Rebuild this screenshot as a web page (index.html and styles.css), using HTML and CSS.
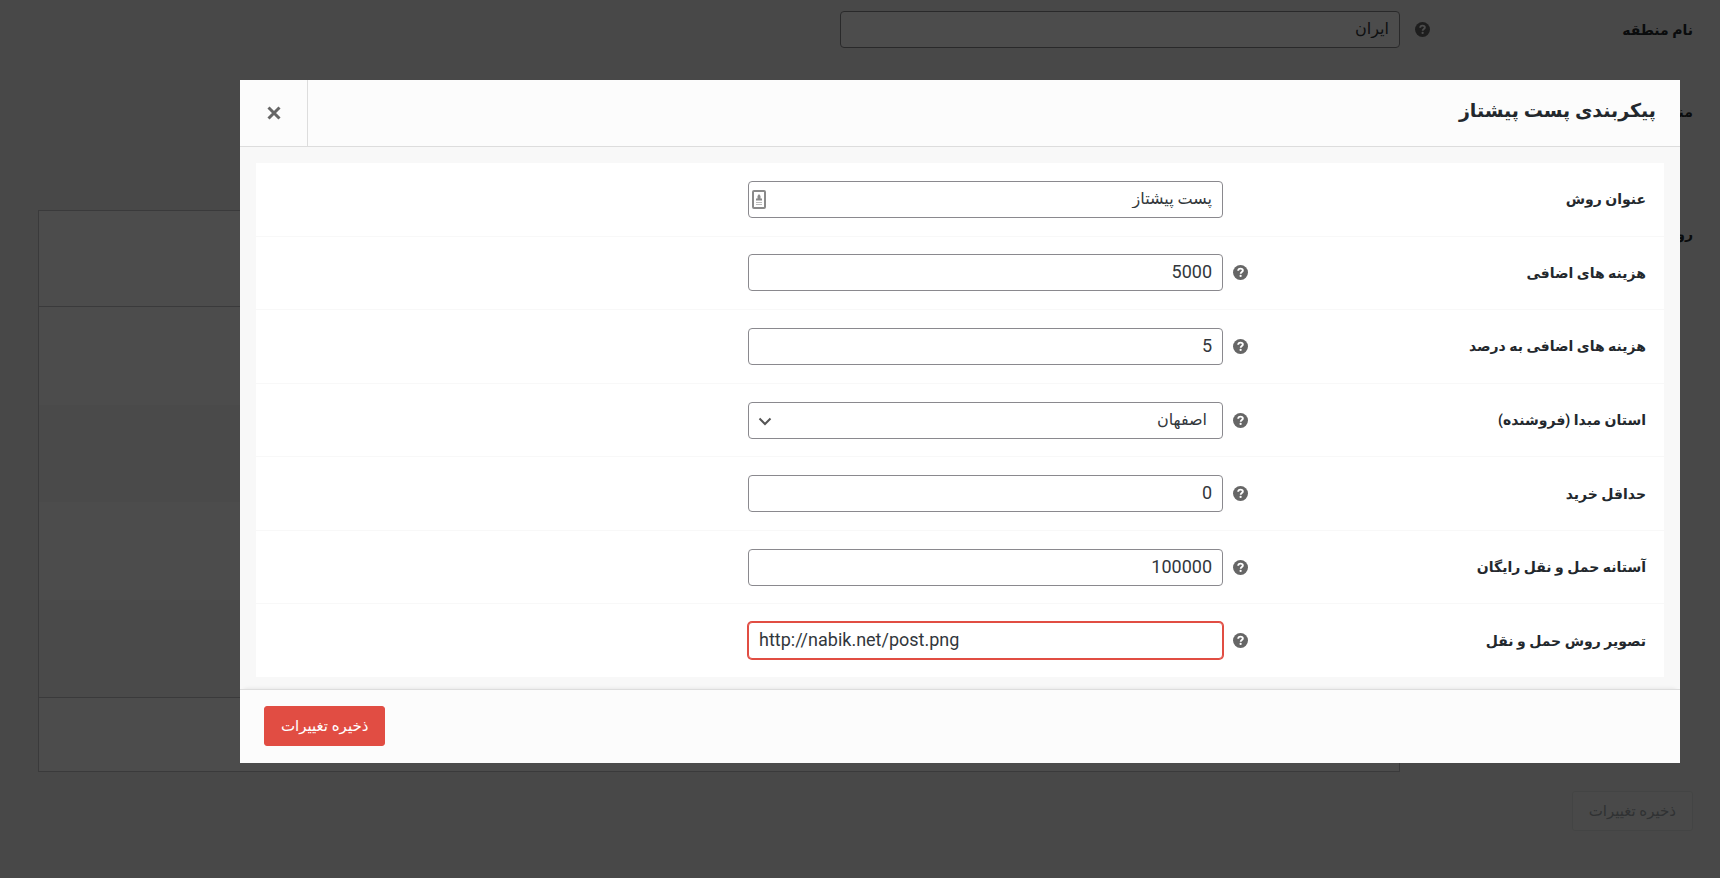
FILE: index.html
```
<!DOCTYPE html>
<html lang="fa" dir="rtl">
<head>
<meta charset="utf-8">
<meta name="viewport" content="width=device-width, initial-scale=1">
<title>پیکربندی پست پیشتاز</title>
<link rel="stylesheet" href="styles.css">
</head>
<body>
<svg class="sprite" aria-hidden="true">
  <symbol id="help" viewBox="0 0 16 16">
    <circle cx="8" cy="8" r="8" fill="currentColor"/>
    <path class="help-mark" d="M5.500 6.200C5.600 4.600 6.600 3.900 8 3.900c1.500 0 2.500.8 2.500 2 0 1.700-2.300 1.700-2.300 3.500"/>
    <circle class="help-dot" cx="8.100" cy="11.700" r="1.200"/>
  </symbol>
</svg>

<main class="page">
  <div class="zone-row">
    <label class="zone-label" for="zone-name">نام منطقه</label>
    <svg class="help"><use href="#help"/></svg>
    <input class="field field-fa" id="zone-name" type="text" value="ایران">
  </div>
  <div class="zone-row zone-regions">
    <span class="zone-label">منطقه</span>
  </div>
  <div class="zone-row zone-methods">
    <span class="zone-label">روش‌ها</span>
    <div class="methods">
      <div class="methods-head"></div>
      <div class="methods-body">
        <div class="method"></div>
        <div class="method"></div>
        <div class="method"></div>
        <div class="method"></div>
      </div>
      <div class="methods-foot"></div>
    </div>
  </div>
  <button class="button button-disabled" type="button" disabled>ذخیره تغییرات</button>
</main>

<div class="overlay">
  <section class="modal" role="dialog" aria-labelledby="modal-title">
    <header class="modal-header">
      <h1 class="modal-title" id="modal-title">پیکربندی پست پیشتاز</h1>
      <button class="close" type="button" aria-label="بستن">
        <svg class="close-icon" viewBox="0 0 14 14"><path d="M1.500 1.500l11 11M12.500 1.500l-11 11"/></svg>
      </button>
    </header>
    <form class="modal-body" id="method-form">
      <div class="rows">
        <div class="row">
          <label class="row-label" for="title">عنوان روش</label>
          <span></span>
          <div class="control">
            <input class="field field-fa" id="title" type="text" value="پست پیشتاز">
            <svg class="contact" viewBox="0 0 14 19"><rect x="1" y="1" width="12" height="17" rx="1"/><path class="contact-fill" d="M7 4l1.500 2v2.500h1.500v2H4v-2h1.500V6z"/><path class="contact-line" d="M4 12.500h6M4 14.500h6"/></svg>
          </div>
        </div>
        <div class="row">
          <label class="row-label" for="extra">هزینه های اضافی</label>
          <svg class="help"><use href="#help"/></svg>
          <input class="field" id="extra" type="text" value="5000">
        </div>
        <div class="row">
          <label class="row-label" for="percent">هزینه های اضافی به درصد</label>
          <svg class="help"><use href="#help"/></svg>
          <input class="field" id="percent" type="text" value="5">
        </div>
        <div class="row">
          <label class="row-label" for="province">استان مبدا (فروشنده)</label>
          <svg class="help"><use href="#help"/></svg>
          <div class="control">
            <select class="field field-fa select" id="province"><option>اصفهان</option></select>
            <svg class="chevron" viewBox="0 0 14 9"><path d="M1.500 1.500L7 7l5.500-5.500"/></svg>
          </div>
        </div>
        <div class="row">
          <label class="row-label" for="minimum">حداقل خرید</label>
          <svg class="help"><use href="#help"/></svg>
          <input class="field" id="minimum" type="text" value="0">
        </div>
        <div class="row">
          <label class="row-label" for="free">آستانه حمل و نقل رایگان</label>
          <svg class="help"><use href="#help"/></svg>
          <input class="field" id="free" type="text" value="100000">
        </div>
        <div class="row">
          <label class="row-label" for="image">تصویر روش حمل و نقل</label>
          <svg class="help"><use href="#help"/></svg>
          <input class="field field-active" id="image" type="text" dir="ltr" value="http://nabik.net/post.png">
        </div>
      </div>
    </form>
    <footer class="modal-footer">
      <button class="button button-primary" type="submit" form="method-form">ذخیره تغییرات</button>
    </footer>
  </section>
</div>
</body>
</html>
```
FILE: styles.css
```
* {
  box-sizing: border-box;
}

body {
  margin: 0;
  background: #f1f1f1;
  color: #23282d;
  font-family: Roboto, "DejaVu Sans", sans-serif;
  font-size: 14px;
  line-height: 24px;
}

.sprite {
  position: absolute;
  width: 0;
  height: 0;
}

.help {
  width: 15px;
  height: 15px;
  color: #666;
}

.help-mark {
  fill: none;
  stroke: #fff;
  stroke-width: 2;
}

.help-dot {
  fill: #fff;
}

.field {
  display: block;
  width: 100%;
  height: 37px;
  padding: 0 10px 2px;
  border: 1px solid #8a898e;
  border-radius: 4px;
  background: #fff;
  color: #32373c;
  font-family: inherit;
  font-size: 18px;
}

.field-fa {
  font-size: 16px;
}

.field-active {
  border-color: #e14d43;
  box-shadow: 0 0 0 1px #e14d43;
  outline: none;
}

.select {
  padding: 0 15px 2px;
  appearance: none;
}

.button {
  height: 40px;
  padding: 0 16px;
  border: 1px solid;
  border-radius: 3px;
  font-family: inherit;
  font-size: 15px;
}

.button-primary {
  border-color: #e14d43;
  background: #e14d43;
  color: #fff;
}

.button-disabled {
  margin-top: 19px;
  border-color: #e2e4e3;
  background: #f3f6f5;
  color: #a0a5aa;
}

/* Zone settings page */

.page {
  min-height: 100vh;
  padding: 11px 27px 0 38px;
}

.zone-row {
  display: grid;
  grid-template-columns: 263fr 30fr 560fr 802fr;
  align-items: center;
}

.zone-label {
  font-weight: bold;
  white-space: nowrap;
}

.zone-regions {
  margin-top: 52px;
}

.zone-methods {
  margin-top: 86px;
  align-items: start;
}

.zone-methods .zone-label {
  padding-top: 12px;
}

.methods {
  grid-column: 3 / 5;
  border: 1px solid #c3c4c7;
  background: #fff;
}

.methods-head {
  height: 96px;
  border-bottom: 1px solid #c3c4c7;
}

.methods-body {
  display: flex;
  flex-direction: column;
  min-height: 390px;
}

.method {
  flex: 1;
}

.method:nth-child(even) {
  background: #f9f9f9;
}

.methods-foot {
  height: 74px;
  border-top: 1px solid #c3c4c7;
}

/* Modal */

.overlay {
  position: fixed;
  inset: 0;
  padding: 80px 40px 0 240px;
  background: rgba(0, 0, 0, 0.7);
}

.modal {
  background: #f8f8f8;
}

.modal-header {
  display: flex;
  justify-content: space-between;
  border-bottom: 1px solid #ddd;
  background: #fcfcfc;
}

.modal-title {
  margin: 0;
  padding: 14px 24px 18px;
  font-size: 19px;
  line-height: 34px;
}

.close {
  width: 68px;
  padding: 0;
  border: 0;
  border-right: 1px solid #ddd;
  background: none;
  color: #666;
}

.close-icon {
  display: block;
  width: 14px;
  height: 14px;
  margin: auto;
  fill: none;
  stroke: currentColor;
  stroke-width: 3;
}

.modal-body {
  padding: 16px 16px 12px;
}

.rows {
  display: flex;
  flex-direction: column;
  min-height: 514px;
  background: #fff;
}

.row {
  display: grid;
  flex: 1;
  grid-template-columns: 398fr 25fr 475fr 492fr;
  align-items: center;
  padding-right: 18px;
  border-bottom: 1px solid #f8f8f8;
}

.row:last-child {
  border-bottom: 0;
}

.row-label {
  font-weight: bold;
}

.control {
  position: relative;
}

.contact,
.chevron {
  position: absolute;
  fill: none;
  stroke: #555;
  stroke-width: 2;
  pointer-events: none;
}

.contact {
  top: 9px;
  left: 4px;
  width: 14px;
  height: 19px;
  stroke: #8a8a8a;
}

.contact-fill {
  fill: #8a8a8a;
  stroke: none;
}

.contact-line {
  stroke: #bbb;
  stroke-width: 1;
}

.chevron {
  top: 15px;
  left: 10px;
  width: 14px;
  height: 9px;
}

.modal-footer {
  display: flex;
  justify-content: flex-end;
  padding: 16px 24px 17px;
  border-top: 1px solid #ddd;
  background: #fcfcfc;
  box-shadow: 0 -4px 4px -4px rgba(0, 0, 0, 0.1);
}
```
